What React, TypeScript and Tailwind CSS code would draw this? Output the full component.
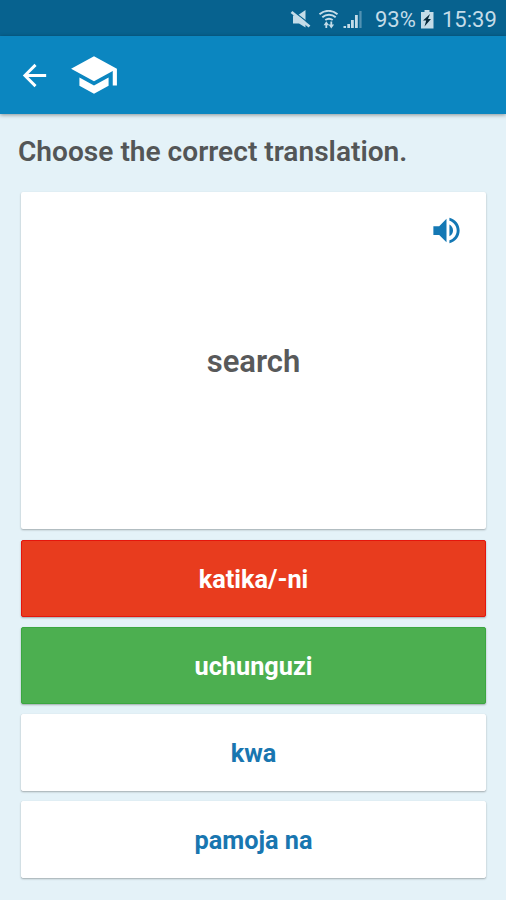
interface OptionProps {
  label: string
  className: string
}

const options: OptionProps[] = [
  {
    label: 'katika/-ni',
    className:
      'bg-[#e83c1e] text-white border-[#e5150c] shadow-[0_1px_2px_rgba(0,0,0,0.3)]',
  },
  {
    label: 'uchunguzi',
    className:
      'bg-[#4caf50] text-white border-[#3ba740] shadow-[0_1px_2px_rgba(0,0,0,0.3)]',
  },
  {
    label: 'kwa',
    className:
      'bg-white text-[#1976b0] border-white shadow-[0_1px_2px_rgba(0,0,0,0.3)]',
  },
  {
    label: 'pamoja na',
    className:
      'bg-white text-[#1976b0] border-white shadow-[0_1px_2px_rgba(0,0,0,0.3)]',
  },
]

function StatusBar() {
  return (
    <div className="flex h-9 items-center bg-[#07628f] pl-[290px] pt-[3px] text-[22px] leading-none text-[#c4dce8]">
      <svg className="h-5 w-[22px] shrink-0" viewBox="0 0 22 20" fill="currentColor">
        <path d="M3 5.500h4.500L15.500 0v17.500l-6.500-4H3z" />
        <path d="M3 1l18 14" stroke="#07628f" strokeWidth="1.200" />
        <path d="M1.500 2l18 14.500" stroke="currentColor" strokeWidth="2.800" />
      </svg>
      <svg
        className="ml-[6px] h-5 w-[22px] shrink-0"
        viewBox="0 0 22 20"
        fill="none"
        stroke="currentColor"
        strokeWidth="1.900"
      >
        <path d="M1.500 4.200c5.200-4.500 12.800-4.500 18 0M4.300 7.200c3.800-3.300 9.600-3.300 13.400 0M7.300 10c2.200-1.600 5.200-1.600 7.400 0" />
        <path d="M8.300 18v-4M13.300 11.500v4" strokeWidth="1.800" />
        <path d="M5.600 15.200l2.700-4 2.700 4zM10.500 14.500h5.600L13.300 18.500z" fill="currentColor" stroke="none" />
      </svg>
      <svg className="ml-[3px] h-5 w-5 shrink-0" viewBox="0 0 20 20" fill="currentColor">
        <path d="M0.500 16h2.500v2H0.500zM4.300 14H7v4H4.300zM8 10h2.800v8H8zM12 5h2.800v13H12z" />
        <path d="M16.300 1h2.300v17h-2.300z" opacity="0.4" />
      </svg>
      <span className="ml-[12px] w-[42px] whitespace-nowrap">93%</span>
      <svg className="ml-[3px] h-5 w-[14px] shrink-0" viewBox="0 0 14 20" fill="currentColor">
        <path d="M4.500 0h5v2H13.500v16.500H1V2h3.500z" />
        <path d="M10 4L3 10.500h3.200L4.500 16.500 11 9H8z" fill="#082a3b" />
      </svg>
      <span className="ml-[8px] whitespace-nowrap text-[22px]">15:39</span>
    </div>
  )
}

function AppBar() {
  return (
    <header className="relative flex h-[78px] items-center bg-[#0b86c0] pl-[17px] text-white shadow-[0_1px_4px_rgba(0,0,0,0.4)]">
      <svg className="size-[35px]" viewBox="0 0 24 24" fill="currentColor">
        <path d="M20 11H7.830l5.590-5.590L12 4l-8 8 8 8 1.410-1.410L7.830 13H20v-2z" />
      </svg>
      <svg className="ml-[17px] size-[50px]" viewBox="0 0 24 24" fill="currentColor">
        <path d="M5 13.180v4L12 21l7-3.820v-4L12 17l-7-3.820zM12 3L1 9l11 6 9-4.910V17h2V9L12 3z" />
      </svg>
    </header>
  )
}

function Option({ label, className }: OptionProps) {
  return (
    <button
      className={`flex h-[76.500px] w-full items-center justify-center rounded-[2px] border pt-[3.500px] text-[25.300px] font-bold leading-none ${className}`}
    >
      {label}
    </button>
  )
}

export default function App() {
  return (
    <div className="h-[900px] w-[506px] overflow-hidden bg-[#e4f2f8] font-['Roboto',sans-serif]">
      <StatusBar />
      <AppBar />
      <main className="pl-[21px] pr-5">
        <h1 className="-ml-[3px] flex h-[78px] items-center whitespace-nowrap pb-[2px] text-[28.100px] font-semibold leading-none text-[#535657]">
          Choose the correct translation.
        </h1>
        <section className="flex h-[337px] flex-col rounded-[2px] bg-white shadow-[0_1px_2px_rgba(0,0,0,0.3)]">
          <div className="flex justify-end pr-[22px] pt-[21px]">
            <svg className="size-[35px] text-[#1478b4]" viewBox="0 0 24 24" fill="currentColor">
              <path d="M3 9v6h4l5 5V4L7 9H3zm13.500 3c0-1.770-1.020-3.290-2.500-4.030v8.050c1.480-.73 2.500-2.250 2.500-4.020zM14 3.230v2.060c2.890.86 5 3.540 5 6.710s-2.110 5.850-5 6.710v2.060c4.010-.91 7-4.490 7-8.770s-2.990-7.860-7-8.770z" />
            </svg>
          </div>
          <p className="pt-[98px] text-center text-[31px] font-semibold leading-none text-[#58595a]">
            search
          </p>
        </section>
        <div className="mt-[11px] flex flex-col gap-[10.500px]">
          {options.map((option) => (
            <Option key={option.label} {...option} />
          ))}
        </div>
      </main>
    </div>
  )
}
